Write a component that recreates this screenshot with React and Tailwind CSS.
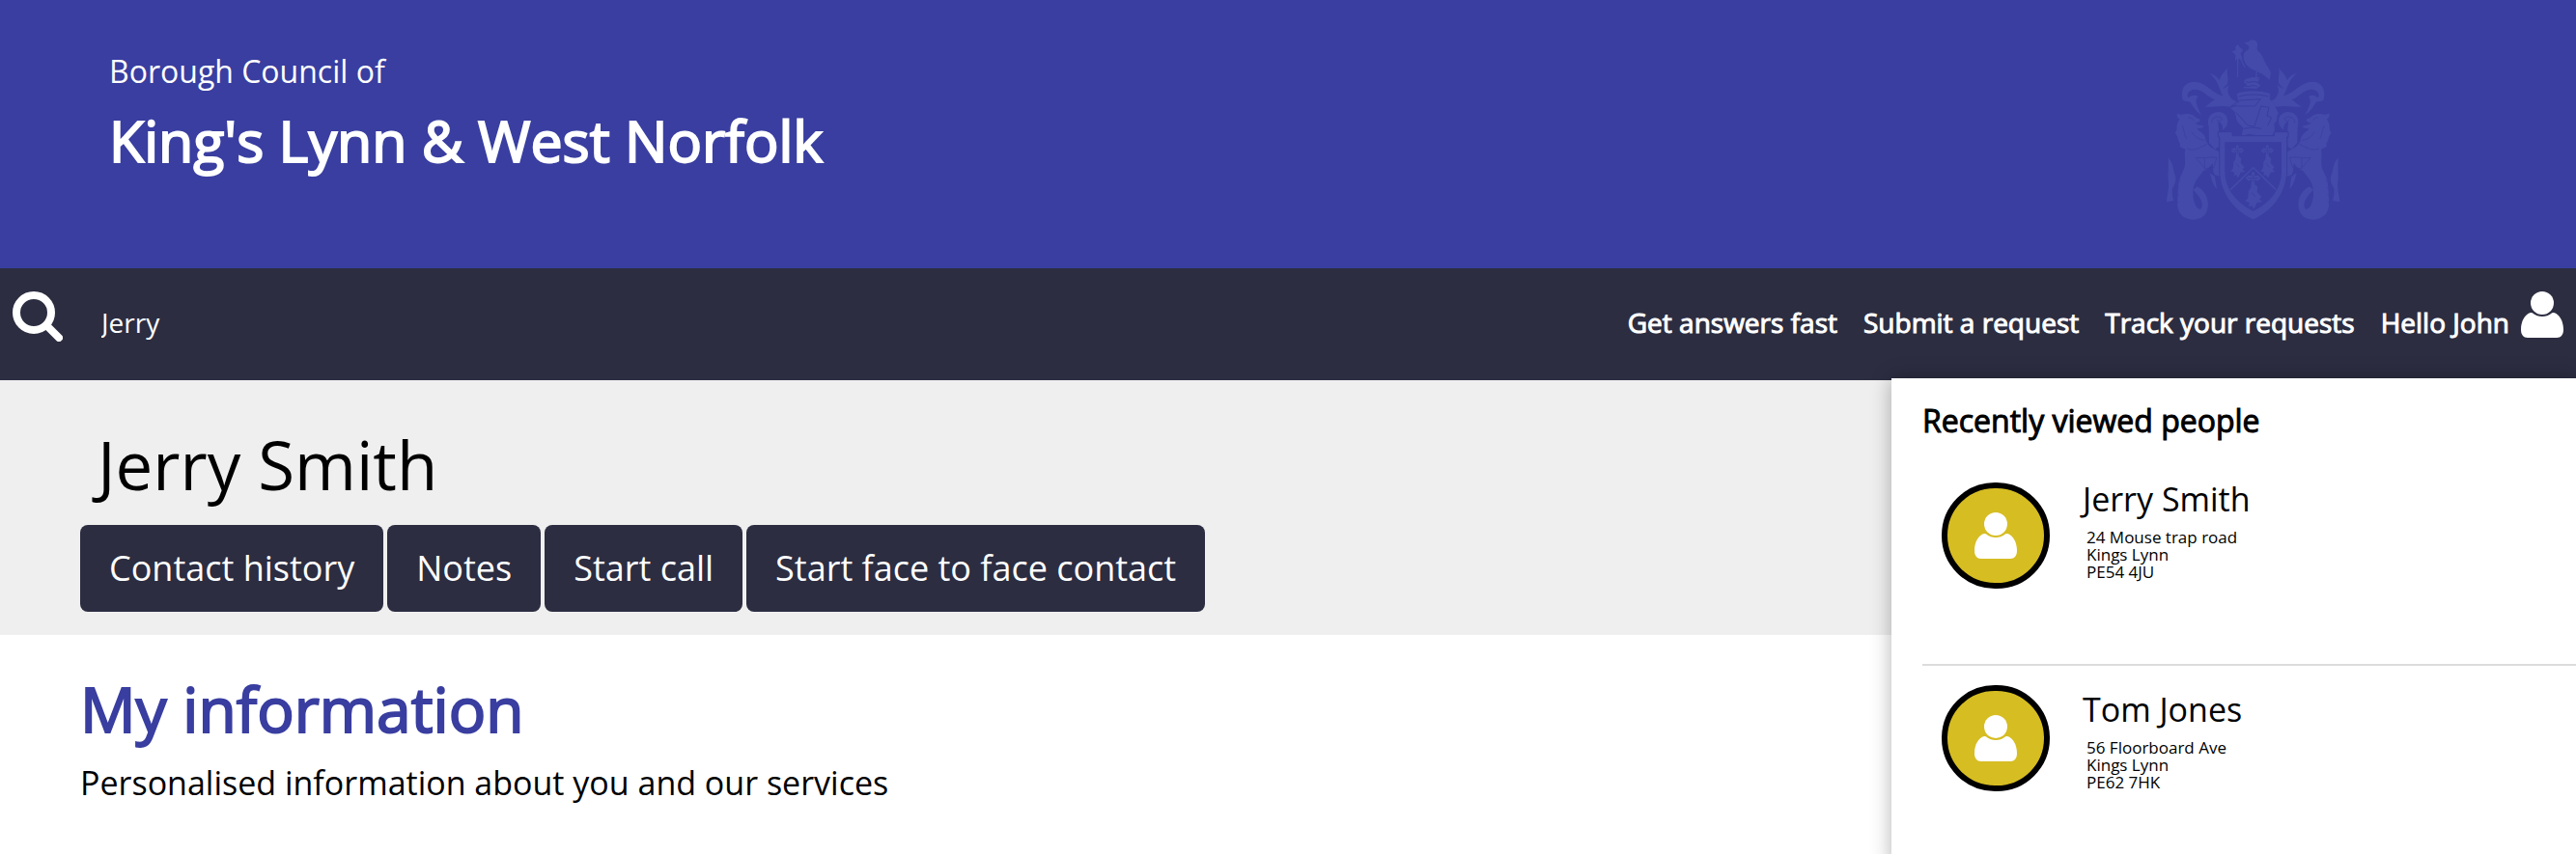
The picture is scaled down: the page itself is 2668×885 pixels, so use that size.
const people = [
  {
    name: "Jerry Smith",
    address: ["24 Mouse trap road", "Kings Lynn", "PE54 4JU"],
  },
  {
    name: "Tom Jones",
    address: ["56 Floorboard Ave", "Kings Lynn", "PE62 7HK"],
  },
];

const navLinks = ["Get answers fast", "Submit a request", "Track your requests", "Hello John"];
const actions = ["Contact history", "Notes", "Start call", "Start face to face contact"];

function SearchIcon({ className }) {
  return (
    <svg viewBox="0 0 52 52" fill="none" stroke="currentColor" strokeWidth="8" strokeLinecap="round" className={className} aria-hidden="true">
      <circle cx="22" cy="22" r="18" />
      <path d="M36 36 L48 48" />
    </svg>
  );
}

function PersonIcon({ className }) {
  return (
    <svg viewBox="0 0 44 48" fill="currentColor" className={className} aria-hidden="true">
      <circle cx="22" cy="12" r="12" />
      <path d="M10 22 C11.5 22 12 22.2 12.8 23 C15.3 25 18.4 26 22 26 C25.6 26 28.7 25 31.2 23 C32 22.2 32.5 22 34 22 C40 23.5 44 31 44 39.5 C44 45 41.5 48 37 48 H7 C2.5 48 0 45 0 39.5 C0 31 4 23.5 10 22 Z" />
    </svg>
  );
}

// Left supporter and mantling, mirrored for the right side
function CrestSide({ transform }) {
  return (
    <g transform={transform}>
      <path d="M122 250 C112 212 135 188 170 196 C200 204 218 232 248 238 C235 225 238 195 205 168 C222 172 230 180 236 190 C240 170 252 165 262 150 C256 172 268 185 260 202 C256 208 250 210 248 216 C256 212 262 206 268 205 C258 218 262 235 275 248 L300 262 L268 272 C240 266 215 274 190 272 C204 266 208 256 222 250 C200 244 185 216 158 218 C140 221 132 234 140 244 C148 236 158 234 170 240 C158 252 164 264 180 298 C160 284 152 268 146 258 C138 254 128 258 122 250 Z" />
      <path d="M104 292 C118 302 130 290 150 296 C158 298 160 306 174 310 C180 316 172 322 160 322 C168 330 178 328 190 333 C182 338 176 340 168 338 C168 346 180 348 186 358 C196 366 190 378 204 392 C220 408 242 406 244 430 L240 490 L222 484 C214 474 218 462 214 448 C208 460 196 468 186 472 C172 492 154 506 154 540 C154 570 166 592 178 590 C190 574 176 552 154 530 L166 520 C196 534 206 566 198 594 C190 620 160 628 138 620 C112 612 102 590 106 556 C108 526 106 500 122 474 C136 448 124 428 130 404 L112 396 C118 386 106 380 106 366 L98 352 C108 344 100 336 106 322 L112 310 C104 306 104 300 104 292 Z" />
      <path d="M76 430 C92 446 92 462 96 478 C104 496 100 512 90 526 C88 544 92 554 94 564 L72 568 C72 550 80 530 78 508 C74 480 80 460 76 430 Z" />
      <path d="M203 335 C194 305 212 286 236 288 C258 290 268 312 258 332 L246 346 C248 332 242 320 232 318 L234 342 V396 L222 404 L204 384 Z" />
      <path d="M206 478 L222 488 L228 528 C222 522 216 512 212 500 Z" />
      <g fill="none" stroke="#393ea0" strokeWidth="2">
        <path d="M212 322 C210 306 228 298 242 306 C248 314 236 320 228 312" />
        <path d="M162 430 C185 434 205 426 228 430 L218 462 L192 464 L162 430 M190 432 V464" />
        <path d="M136 402 C155 412 178 398 198 388 M150 350 C158 364 172 374 190 376" />
        <path d="M138 306 C146 304 152 308 156 314 M120 330 C128 342 124 356 134 372" />
        <path d="M120 480 L110 488 M116 500 L106 508 M112 522 L104 530 M110 544 L102 552 M110 566 L102 574" />
      </g>
    </g>
  );
}

function CrestCharge({ transform }) {
  return (
    <g transform={transform}>
      <path d="M-4 0 L0 -5 L4 0 V8 L12 6 L20 14 L12 22 L4 18 V32 L12 38 L10 52 L22 66 L16 72 L24 80 L10 82 L2 100 L-4 90 L-12 94 L-10 82 L-22 78 L-14 70 L-12 50 L-6 40 L-4 18 L-12 22 L-20 14 L-12 6 L-4 8 Z" />
      <path d="M-14 14 H14 M0 4 V26 M-4 54 L6 66" fill="none" stroke="#393ea0" strokeWidth="2" />
    </g>
  );
}

function Crest({ className }) {
  return (
    <svg viewBox="0 0 690 690" fill="currentColor" className={className} aria-hidden="true">
      <CrestSide />
      <CrestSide transform="translate(682 0) scale(-1 1)" />

      {/* Bird holding a cross */}
      <path d="M312 72 L326 70 C334 60 352 62 354 76 C356 86 350 90 356 98 C372 110 374 132 386 146 L396 166 L392 188 L366 168 C358 166 354 160 344 158 C322 150 306 130 312 106 C316 96 330 98 328 84 Z" />
      <path d="M286 84 L294 78 L300 88 L310 96 L302 106 L308 126 L296 122 L294 180 H291 V122 L284 132 L286 110 L274 100 L286 96 Z" />
      <path d="M300 120 L316 150 M352 158 L350 182 M336 182 H360" fill="none" stroke="currentColor" strokeWidth="4" />

      {/* Torse and helmet */}
      <path d="M316 186 L340 180 L362 186 L354 196 L364 206 L352 216 L308 214 L322 204 L312 196 Z" />
      <path d="M290 232 C310 220 370 220 394 232 L392 248 C408 262 412 278 420 292 C410 304 420 316 406 324 L408 346 L400 362 H360 L326 356 L304 366 L310 338 L290 316 L284 288 L270 276 L296 262 Z" />
      <g fill="none" stroke="#393ea0" strokeWidth="3">
        <path d="M318 194 C330 200 344 188 356 198 M316 208 C330 212 340 200 354 210" />
        <path d="M296 240 C320 232 360 232 388 240 M272 270 L300 252 L364 248 L346 270 L276 270" />
        <path d="M288 290 L324 330 L344 334 L366 268 M310 340 L340 336 L366 340 M366 270 L390 274 L384 300 L398 306 L386 330" />
      </g>

      {/* Shield */}
      <path d="M232 350 H276 V362 H406 V350 H450 V366 H446 V470 C446 548 392 600 341 624 C290 600 236 548 236 470 V366 H232 Z" stroke="#393ea0" strokeWidth="3" />
      <path d="M253 382 H429 V470 C429 534 386 574 341 596 C296 574 253 534 253 470 Z" fill="#393ea0" />
      <path d="M270 530 L341 462 L412 530" fill="none" stroke="currentColor" strokeWidth="5" />
      <CrestCharge transform="translate(292 394)" />
      <CrestCharge transform="translate(385 394)" />
      <path d="M341 464 L372 496 L356 520 H326 L310 496 Z" fill="#393ea0" />
      <CrestCharge transform="translate(341 478) scale(1.2 1.12)" />
    </svg>
  );
}

function Header() {
  return (
    <header className="flex h-[278px] justify-between bg-[#393ea0] pl-[113px] pr-[218px] text-white">
      <div className="pt-[50px]">
        <p className="text-[32px] leading-[48px]">Borough Council of</p>
        <h1 className="text-[59px] leading-[94px] [-webkit-text-stroke:2px]">
          King's Lynn &amp; West Norfolk
        </h1>
      </div>
      <Crest className="mt-5 size-[230px] text-[#434aa9]" />
    </header>
  );
}

function NavBar() {
  return (
    <nav className="flex h-[116px] items-start justify-between bg-[#2c2d41] px-[13px] pt-6 text-[28px] leading-[40px] text-white">
      <form className="flex grow" role="search">
        <button type="submit" aria-label="Search">
          <SearchIcon className="size-[52px]" />
        </button>
        <input
          type="text"
          aria-label="Search people"
          defaultValue="Jerry"
          className="ml-10 mt-3 h-10 w-96 bg-transparent outline-none"
        />
      </form>
      <div className="flex">
        <div className="mr-3 mt-3 flex gap-[27px] [-webkit-text-stroke:1px]">
          {navLinks.map((link) => (
            <a key={link} href="#">{link}</a>
          ))}
        </div>
        <PersonIcon className="h-12 w-11" />
      </div>
    </nav>
  );
}

function RecentPeople() {
  return (
    <aside className="relative -mt-[2px] min-h-[493px] w-[709px] shrink-0 bg-white pl-8 pt-6 shadow-[0_0_20px_rgba(0,0,0,0.3)]">
      <h2 className="text-[32px] leading-[40px] [-webkit-text-stroke:1px]">Recently viewed people</h2>
      <ul className="pt-6">
        {people.map((person) => (
          <li key={person.name} className="group flex h-[210px] border-b-2 border-[#dcdcdc] pl-5 pt-5">
            <div className="flex h-[110px] w-28 items-center justify-center rounded-full border-[6px] border-black bg-[#d6bd22] text-white">
              <PersonIcon className="h-12 w-11" />
            </div>
            <div className="ml-[34px] group-last:mt-2">
              <h3 className="text-[34px] leading-[34px]">{person.name}</h3>
              <address className="ml-1 mt-[14px] text-[17px] leading-[18px] not-italic">
                {person.address.map((line) => (
                  <p key={line}>{line}</p>
                ))}
              </address>
            </div>
          </li>
        ))}
      </ul>
    </aside>
  );
}

function App() {
  return (
    <div className="min-h-screen bg-white font-['Open_Sans',sans-serif] text-black">
      <Header />
      <NavBar />
      <div className="flex">
        <main className="grow">
          <section className="bg-[#efefef] pb-6 pl-[83px] pt-[38px]">
            <h2 className="pl-[18px] text-[69px] leading-[98px]">Jerry Smith</h2>
            <div className="mt-[14px] flex gap-1">
              {actions.map((action) => (
                <button
                  key={action}
                  type="button"
                  className="rounded-lg bg-[#2c2d41] px-[30px] text-[36px] leading-[90px] text-white"
                >
                  {action}
                </button>
              ))}
            </div>
          </section>
          <section className="pl-[83px] pt-8">
            <h2 className="text-[64px] leading-[90px] text-[#393ea0] [-webkit-text-stroke:2px]">My information</h2>
            <p className="text-[34px] leading-[62px]">Personalised information about you and our services</p>
          </section>
        </main>
        <RecentPeople />
      </div>
    </div>
  );
}

export default App;
